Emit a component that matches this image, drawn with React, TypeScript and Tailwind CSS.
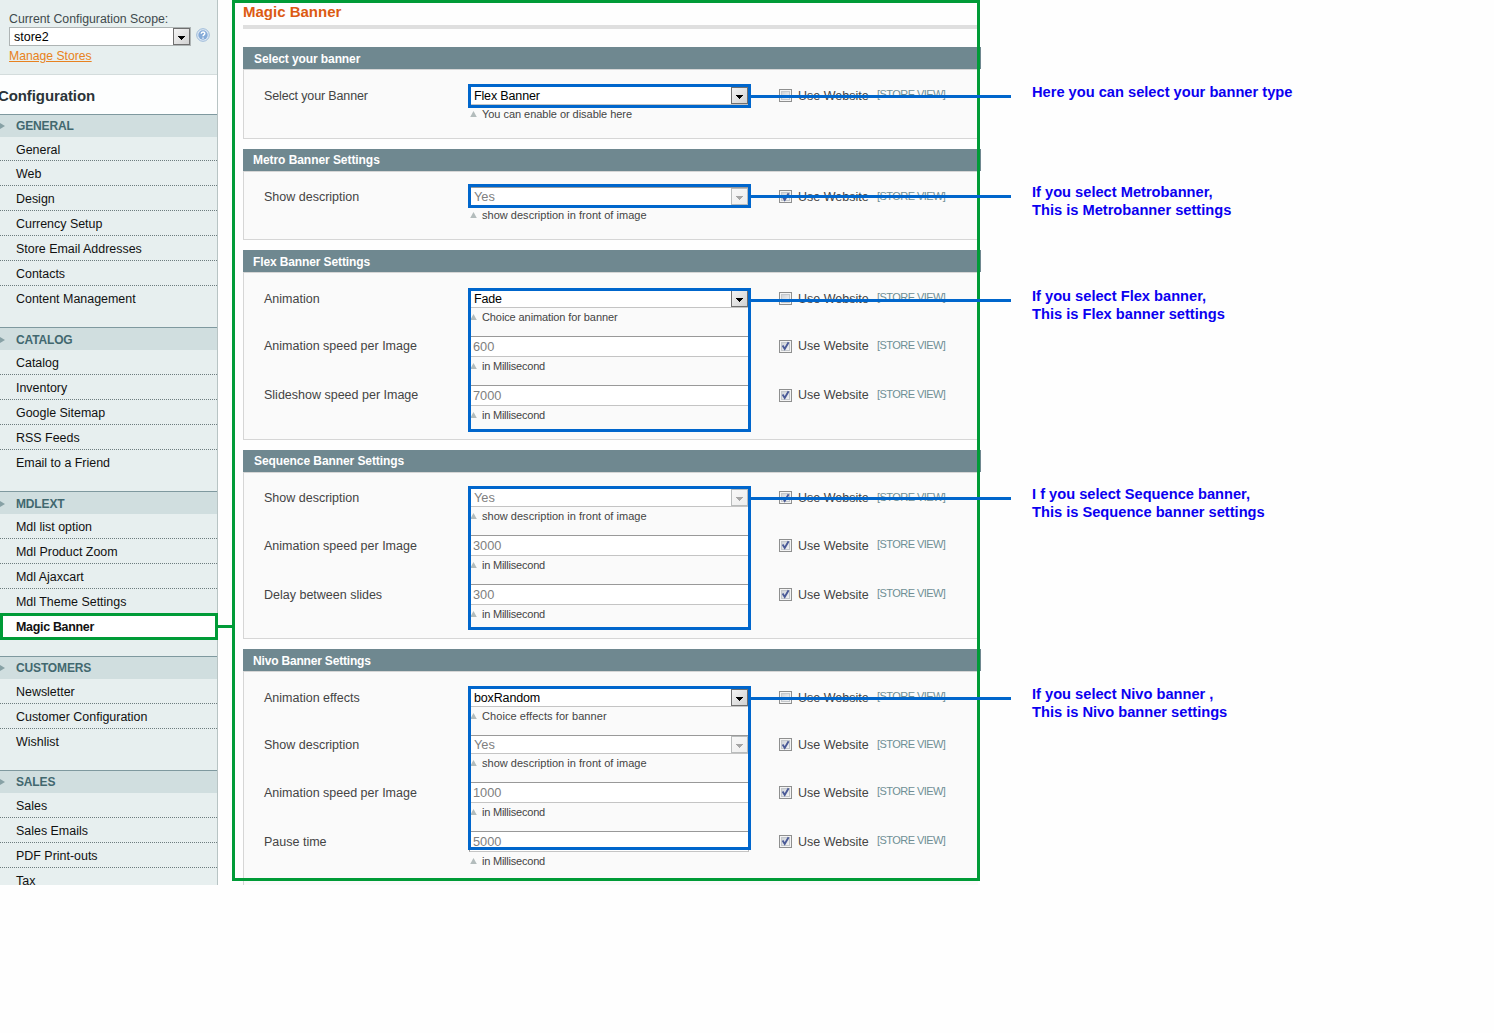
import React from "react";

type Row = {
  label: string;
  value: string;
  hint: string;
  kind: "select" | "input";
  disabled?: boolean;
  checked?: boolean;
  hintClass?: string;
  labelClass?: string;
  scopeClass?: string;
  raised?: boolean;
};

const showDescription: Row = {
  label: "Show description",
  value: "Yes",
  hint: "show description in front of image",
  kind: "select",
  disabled: true,
  checked: true,
  hintClass: "tracking-[0.02px]",
};

const ms = (label: string, value: string, raised = false): Row => ({
  label,
  value,
  raised,
  hint: "in Millisecond",
  kind: "input",
  disabled: true,
  checked: true,
  hintClass: "tracking-[-0.22px]",
});

const panels: { title: string; titleClass: string; body: string; rows: Row[] }[] = [
  {
    title: "Select your banner",
    titleClass: "pt-px pl-[11px] tracking-[-0.1px]",
    body: "h-[70px] pt-4 border-b",
    rows: [
      {
        label: "Select your Banner",
        labelClass: "tracking-[-0.14px]",
        value: "Flex Banner",
        hint: "You can enable or disable here",
        hintClass: "tracking-[-0.04px]",
        scopeClass: "-mt-px",
        kind: "select",
      },
    ],
  },
  {
    title: "Metro Banner Settings",
    titleClass: "pl-[10px] tracking-[-0.06px]",
    body: "h-[69px] pt-[15px] border-b",
    rows: [showDescription],
  },
  {
    title: "Flex Banner Settings",
    titleClass: "pt-px pl-[10px] tracking-[-0.12px]",
    body: "h-[168px] pt-4 border-b",
    rows: [
      {
        label: "Animation",
        value: "Fade",
        hint: "Choice animation for banner",
        hintClass: "tracking-[-0.1px]",
        scopeClass: "-mt-px",
        kind: "select",
      },
      ms("Animation speed per Image", "600", true),
      ms("Slideshow speed per Image", "7000", true),
    ],
  },
  {
    title: "Sequence Banner Settings",
    titleClass: "pl-[11px] tracking-[-0.08px]",
    body: "h-[167px] pt-[15px] border-b",
    rows: [showDescription, ms("Animation speed per Image", "3000"), ms("Delay between slides", "300")],
  },
  {
    title: "Nivo Banner Settings",
    titleClass: "pt-px pl-[10px] tracking-[-0.18px]",
    body: "h-[214px] pt-4",
    rows: [
      {
        label: "Animation effects",
        value: "boxRandom",
        hint: "Choice effects for banner",
        hintClass: "tracking-[0.08px]",
        scopeClass: "-mt-px",
        kind: "select",
      },
      showDescription,
      ms("Animation speed per Image", "1000"),
      ms("Pause time", "5000"),
    ],
  },
];

const nav: { title: string; group: string; heading: string; items: string[] }[] = [
  {
    title: "GENERAL",
    group: "h-[213px]",
    heading: "",
    items: ["General", "Web", "Design", "Currency Setup", "Store Email Addresses", "Contacts", "Content Management"],
  },
  {
    title: "CATALOG",
    group: "h-[164px]",
    heading: "pt-[2px]",
    items: ["Catalog", "Inventory", "Google Sitemap", "RSS Feeds", "Email to a Friend"],
  },
  {
    title: "MDLEXT",
    group: "h-[165px]",
    heading: "pt-[2px]",
    items: ["Mdl list option", "Mdl Product Zoom", "Mdl Ajaxcart", "Mdl Theme Settings", "Magic Banner"],
  },
  { title: "CUSTOMERS", group: "h-[114px]", heading: "", items: ["Newsletter", "Customer Configuration", "Wishlist"] },
  { title: "SALES", group: "h-[140px]", heading: "", items: ["Sales", "Sales Emails", "PDF Print-outs", "Tax"] },
];

const notes: { lines: string[]; gap: string }[] = [
  { lines: ["Here you can select your banner type"], gap: "mt-[83px]" },
  { lines: ["If you select Metrobanner,", "This is Metrobanner settings"], gap: "mt-[82px]" },
  { lines: ["If you select Flex banner,", "This is Flex banner settings"], gap: "mt-[68px]" },
  { lines: ["I f you select Sequence banner,", "This is Sequence banner settings"], gap: "mt-[162px]" },
  { lines: ["If you select Nivo banner ,", "This is Nivo banner settings"], gap: "mt-[164px]" },
];

const callouts: { box: string; line: string }[] = [
  { box: "top-[84px] h-6", line: "top-[95px]" },
  { box: "top-[184px] h-6", line: "top-[195px]" },
  { box: "top-[288px] h-36", line: "top-[299px]" },
  { box: "top-[486px] h-36", line: "top-[497px]" },
  { box: "top-[686px] h-[164px]", line: "top-[697px]" },
];

function ArrowButton({ disabled = false }: { disabled?: boolean }) {
  return (
    <span
      className={`flex h-[17px] w-[17px] shrink-0 items-center justify-center border bg-gradient-to-br ${
        disabled ? "border-[#b9bcbc] from-[#f8f8f8] to-[#ededed]" : "border-[#6f6f6f] from-[#f4f4f4] to-[#d2d2d2]"
      }`}
    >
      <svg width="7" height="4" viewBox="0 0 7 4" className="mt-[3px]" shapeRendering="crispEdges">
        <path d="M0 0h7v1H0zM1 1h5v1H1zM2 2h3v1H2zM3 3h1v1H3z" fill={disabled ? "#a5a5a5" : "#000"} />
      </svg>
    </span>
  );
}

function Checkbox({ checked = false }: { checked?: boolean }) {
  return (
    <span className="flex h-[13px] w-[13px] shrink-0 items-center justify-center border border-[#8e8f8f] bg-[#f4f4f4]">
      <span className="flex h-[9px] w-[9px] items-center justify-center border border-[#c4c8cc] bg-gradient-to-br from-[#cfd3d8] to-[#f3f3f3]">
        {checked && (
          <svg width="9" height="10" viewBox="0 0 9 10" className="shrink-0">
            <path d="M1.6 4.6 3.7 8 7.6 1.2" fill="none" stroke="#4a5a97" strokeWidth="1.9" />
          </svg>
        )}
      </span>
    </span>
  );
}

function SettingRow({ row }: { row: Row }) {
  const isSelect = row.kind === "select";
  const line = isSelect ? "h-[19px]" : "h-[21px]";
  const sideLine = isSelect ? "h-[19px]" : "h-5";
  const nudge = row.raised ? "" : "pt-[2px]";
  return (
    <div className={`flex pl-5 ${isSelect ? "h-[47px]" : "h-[49px]"}`}>
      <div className={`flex w-[205px] items-center text-[12.5px] text-[#444] ${sideLine} ${nudge} ${row.labelClass ?? ""}`}>
        {row.label}
      </div>
      <div className="w-[310px]">
        <div
          className={`flex w-[280px] items-center justify-between border border-t-[#999] border-r-[#bbb] border-b-[#c4c4c4] border-l-[#999] bg-white ${line} ${
            row.disabled ? "text-[12.8px] text-[#808080]" : "text-[12.5px] tracking-[-0.15px] text-black"
          }`}
        >
          <span className={isSelect ? "pt-[2px] pl-1" : "pt-[2px] pl-[3px]"}>{row.value}</span>
          {isSelect && <ArrowButton disabled={row.disabled} />}
        </div>
        <div className={`flex h-[18px] items-center text-[11px] text-[#444] ${row.hintClass ?? ""}`}>
          <svg width="7" height="6" viewBox="0 0 7 6" className="mr-[5px] ml-px">
            <path d="M3.5 0 6.8 6H.2z" fill="#b3bcbc" />
          </svg>
          {row.hint}
        </div>
      </div>
      <div className={`flex w-[98px] items-center text-[12.5px] text-[#444] ${sideLine}`}>
        <Checkbox checked={row.checked} />
        <span className={`ml-[6px] ${nudge}`}>Use Website</span>
      </div>
      <div className={`flex h-[19px] items-center text-[11px] tracking-[-0.55px] text-[#6f8f95] ${row.scopeClass ?? ""}`}>
        [STORE VIEW]
      </div>
    </div>
  );
}

function Sidebar() {
  return (
    <aside className="relative h-[885px] w-[218px] shrink-0 overflow-hidden border-r border-[#b8c4c4] bg-[#e7efef]">
      <div className="h-[75px] border-b border-[#d3dcdc] pt-[11px] pl-[9px]">
        <div className="h-4 text-[12.3px] leading-4 text-[#3f4a4d]">Current Configuration Scope:</div>
        <div className="flex items-center">
          <div className="flex h-[19px] w-[182px] items-center justify-between border border-[#aeb4b4] bg-white pl-1 text-[12.5px] text-black">
            <span className="pt-[2px]">store2</span>
            <ArrowButton />
          </div>
          <svg width="14" height="14" viewBox="0 0 14 14" className="-mt-[3px] ml-[5px]">
            <circle cx="7" cy="7" r="6.3" fill="#dfeaf5" stroke="#9dbad9" />
            <circle cx="7" cy="7" r="4.7" fill="#86abd8" />
            <path d="M5.2 5.8c0-2.4 3.6-2.3 3.6-.2C8.8 6.9 7 6.9 7 8.3M7 9.4v1.3" fill="none" stroke="#fff" strokeWidth="1.4" />
          </svg>
        </div>
        <a className="block text-[12.2px] leading-[20px] text-[#e88220] underline">Manage Stores</a>
      </div>
      <div className="flex h-[39px] items-center bg-[#fdfefe] pt-[2px] text-[15px] font-bold tracking-[-0.1px] text-[#2b3438]">
        <span className="-ml-[2px]">Configuration</span>
      </div>
      {nav.map((group, g) => (
        <div key={group.title} className={group.group}>
          <div
            className={`flex h-[23px] items-center border-t border-[#7f999f] bg-[#d0dedf] text-[12px] font-bold tracking-[-0.15px] text-[#42686f] ${group.heading}`}
          >
            <svg width="5" height="6" viewBox="0 0 5 6" className="mr-[11px]">
              <path d="M0 0v6l5-3z" fill="#87a1a5" />
            </svg>
            {group.title}
          </div>
          {group.items.map((item, i) => (
            <div
              key={item}
              className={`flex items-center pl-4 text-[12.45px] text-[#111] ${g === 0 && i === 0 ? "h-6" : "h-[25px]"} ${
                i < group.items.length - 1 ? "border-b border-dotted border-[#6d7c7e] pt-[3px]" : "pt-px"
              } ${item === "Magic Banner" ? "bg-white font-bold tracking-[-0.3px]" : ""}`}
            >
              {item}
            </div>
          ))}
        </div>
      ))}
    </aside>
  );
}

export default function App() {
  return (
    <div className="relative flex h-[1033px] w-[1494px] overflow-hidden bg-[#fefefe] font-['Liberation_Sans',Arial,sans-serif] leading-none">
      <Sidebar />
      <main className="ml-[25px] h-[885px] w-[738px] shrink-0 overflow-hidden">
        <h1 className="flex h-[25px] items-center pb-[2px] text-[15px] font-bold text-[#dc5a12]">Magic Banner</h1>
        <div className="h-1 w-[734px] bg-[#dfdfdf]" />
        <div className="mt-[18px] flex flex-col gap-[10px]">
          {panels.map((p) => (
            <section key={p.title}>
              <h2 className={`flex h-[22px] items-center bg-[#6f8890] text-[12px] font-bold text-white ${p.titleClass}`}>
                {p.title}
              </h2>
              <div className={`w-[735px] border-t border-l border-[#d6d6d6] bg-[#fafafa] ${p.body}`}>
                {p.rows.map((row) => (
                  <SettingRow key={row.label} row={row} />
                ))}
              </div>
            </section>
          ))}
        </div>
      </main>
      <div className="ml-[51px] flex flex-col text-[14.65px] leading-[18px] font-bold whitespace-nowrap text-[#0b00f0]">
        {notes.map((n) => (
          <div key={n.lines[0]} className={n.gap}>
            {n.lines.map((l) => (
              <div key={l}>{l}</div>
            ))}
          </div>
        ))}
      </div>

      <div className="absolute top-0 left-[232px] h-[881px] w-[748px] border-3 border-[#009b37]" />
      <div className="absolute top-[613px] left-0 h-[27px] w-[218px] border-3 border-[#009b37]" />
      <div className="absolute top-[625px] left-[218px] h-[3px] w-[14px] bg-[#009b37]" />
      {callouts.map((c) => (
        <React.Fragment key={c.line}>
          <div className={`absolute left-[468px] w-[283px] border-3 border-[#0066cc] ${c.box}`} />
          <div className={`absolute left-[751px] h-[3px] w-[260px] bg-[#0066cc] ${c.line}`} />
        </React.Fragment>
      ))}
    </div>
  );
}
